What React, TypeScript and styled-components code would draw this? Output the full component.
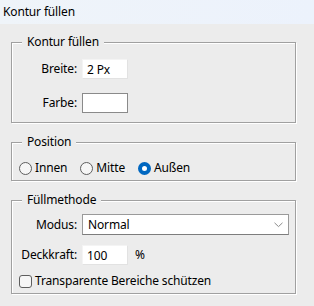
import React, { useState } from "react";
import styled, { createGlobalStyle } from "styled-components";

const Global = createGlobalStyle`
  html, body { margin: 0; padding: 0; background: #ececec; }
  body {
    font-family: "Noto Sans", "Segoe UI", sans-serif;
    font-size: 12px;
    line-height: 16px;
    letter-spacing: -0.15px;
    color: #000;
  }
  * { box-sizing: border-box; }
`;

const Window = styled.div`
  width: 314px;
  height: 306px;
  background: #ececec;
  display: flex;
  flex-direction: column;
  overflow: hidden;
`;

const TitleBar = styled.div`
  height: 24px;
  flex: none;
  display: flex;
  align-items: center;
  padding-left: 3px;
  background: linear-gradient(90deg, #eff4f9, #ecf2fc);
`;

const Body = styled.div`
  display: flex;
  flex-direction: column;
  gap: 19px;
  padding: 18px 18px 0 11px;
`;

const Group = styled.section<{ $pb: number }>`
  display: flex;
  flex-direction: column;
  border: 1px solid #a0a0a0;
  box-shadow: inset 1px 1px 0 #fff, 1px 1px 0 #fff;
  padding: 0 0 ${(p) => p.$pb}px 0;
`;

const Legend = styled.div`
  align-self: flex-start;
  margin: -9px 0 0 10px;
  padding: 0 5px;
  background: #ececec;
  white-space: nowrap;
`;

const FieldRow = styled.div<{ $mt: number }>`
  display: grid;
  grid-template-columns: 65px auto;
  column-gap: 5px;
  align-items: center;
  margin-top: ${(p) => p.$mt}px;
`;

const Label = styled.label`
  text-align: right;
  white-space: nowrap;
`;

const TextBox = styled.input<{ $framed?: boolean }>`
  width: 46px;
  height: 20px;
  margin: 0;
  padding: 0 0 0 4px;
  font: inherit;
  letter-spacing: inherit;
  color: #000;
  background: #fff;
  outline: none;
  border: 1px solid ${(p) => (p.$framed ? "#8a8a8a" : "#f4f4f4")};
  border-bottom-color: ${(p) => (p.$framed ? "#8a8a8a" : "#e2e2e2")};
  border-right-color: ${(p) => (p.$framed ? "#8a8a8a" : "#e2e2e2")};
`;

const Inline = styled.div`
  display: flex;
  align-items: center;
  gap: 7px;
`;

const Select = styled.div`
  width: 207px;
  height: 21px;
  display: flex;
  align-items: center;
  justify-content: space-between;
  padding: 0 5px 0 5px;
  background: #fff;
  border: 1px solid #9a9a9a;
  border-bottom-color: #7d7d7d;
`;

const ChoiceRow = styled.div<{ $mt: number }>`
  display: flex;
  align-items: center;
  gap: 13px;
  padding-left: 7px;
  margin-top: ${(p) => p.$mt}px;
`;

const Choice = styled.label`
  display: flex;
  align-items: center;
  gap: 3px;
  cursor: default;
  white-space: nowrap;
`;

const RadioDot = styled.span<{ $on: boolean }>`
  width: 13px;
  height: 13px;
  border-radius: 50%;
  flex: none;
  background: ${(p) => (p.$on ? "#fff" : "#f6f6f6")};
  border: ${(p) => (p.$on ? "4px solid #0067c0" : "1px solid #5e5e5e")};
`;

const CheckBox = styled.span`
  width: 13px;
  height: 13px;
  flex: none;
  border: 1px solid #5e5e5e;
  border-radius: 3px;
  background: #f6f6f6;
`;

const Chevron = () => (
  <svg width="9" height="6" viewBox="0 0 9 6">
    <path d="M0.5 0.8 L4.5 4.6 L8.5 0.8" fill="none" stroke="#8a8a8a" strokeWidth="1" />
  </svg>
);

export default function App() {
  const [pos, setPos] = useState("aussen");
  const radios = [
    { id: "innen", label: "Innen" },
    { id: "mitte", label: "Mitte" },
    { id: "aussen", label: "Außen" },
  ];
  return (
    <Window>
      <Global />
      <TitleBar>Kontur füllen</TitleBar>
      <Body>
        <Group $pb={9}>
          <Legend>Kontur füllen</Legend>
          <FieldRow $mt={9}>
            <Label>Breite:</Label>
            <TextBox defaultValue="2 Px" />
          </FieldRow>
          <FieldRow $mt={14}>
            <Label>Farbe:</Label>
            <TextBox $framed readOnly />
          </FieldRow>
        </Group>
        <Group $pb={4}>
          <Legend>Position</Legend>
          <ChoiceRow $mt={10}>
            {radios.map((r) => (
              <Choice key={r.id} onClick={() => setPos(r.id)}>
                <RadioDot $on={pos === r.id} />
                {r.label}
              </Choice>
            ))}
          </ChoiceRow>
        </Group>
        <Group $pb={4}>
          <Legend>Füllmethode</Legend>
          <FieldRow $mt={6}>
            <Label>Modus:</Label>
            <Select>
              <span>Normal</span>
              <Chevron />
            </Select>
          </FieldRow>
          <FieldRow $mt={10}>
            <Label>Deckkraft:</Label>
            <Inline>
              <TextBox defaultValue="100" />
              <span>%</span>
            </Inline>
          </FieldRow>
          <ChoiceRow $mt={8}>
            <Choice>
              <CheckBox />
              Transparente Bereiche schützen
            </Choice>
          </ChoiceRow>
        </Group>
      </Body>
    </Window>
  );
}
